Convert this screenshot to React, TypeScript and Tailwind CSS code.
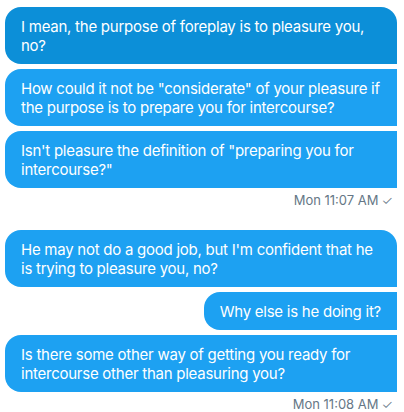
import React from "react";

const font = { fontFamily: "Inter, 'Noto Sans', sans-serif" };

function Bubble({
  text,
  className,
  dark,
}: {
  text: string;
  className: string;
  dark?: boolean;
}) {
  return (
    <div
      className={`text-white text-[15px] leading-[19px] tracking-[-0.25px] pl-4 pr-4 pt-[10px] pb-[9px] ${
        dark ? "bg-[#0c8fd8]" : "bg-[#1da1f2]"
      } ${className}`}
    >
      {text}
    </div>
  );
}

function Stamp({ t }: { t: string }) {
  return (
    <div className="flex justify-end pr-[4px] mt-[4px] text-[13px] leading-4 text-[#657786]">
      <span>{t}</span>
      <span className="ml-[3px] font-light">✓</span>
    </div>
  );
}

export default function App() {
  return (
    <div className="w-[404px] h-[412px] bg-white pl-[5px] pr-[7px] pt-[7px] overflow-hidden" style={font}>
      <div className="flex flex-col gap-[5px]">
        <Bubble dark className="rounded-l-2xl rounded-tr-2xl" text="I mean, the purpose of foreplay is to pleasure you, no?" />
        <Bubble className="rounded-l-2xl" text={'How could it not be "considerate" of your pleasure if the purpose is to prepare you for intercourse?'} />
        <Bubble className="rounded-l-2xl" text={'Isn\'t pleasure the definition of "preparing you for intercourse?"'} />
      </div>
      <Stamp t="Mon 11:07 AM" />
      <div className="flex flex-col gap-[5px] mt-[22px] items-end">
        <Bubble className="rounded-l-2xl rounded-tr-2xl w-full" text="He may not do a good job, but I'm confident that he is trying to pleasure you, no?" />
        <Bubble className="rounded-l-2xl w-fit" text="Why else is he doing it?" />
        <Bubble className="rounded-l-2xl w-full" text="Is there some other way of getting you ready for intercourse other than pleasuring you?" />
      </div>
      <Stamp t="Mon 11:08 AM" />
    </div>
  );
}
